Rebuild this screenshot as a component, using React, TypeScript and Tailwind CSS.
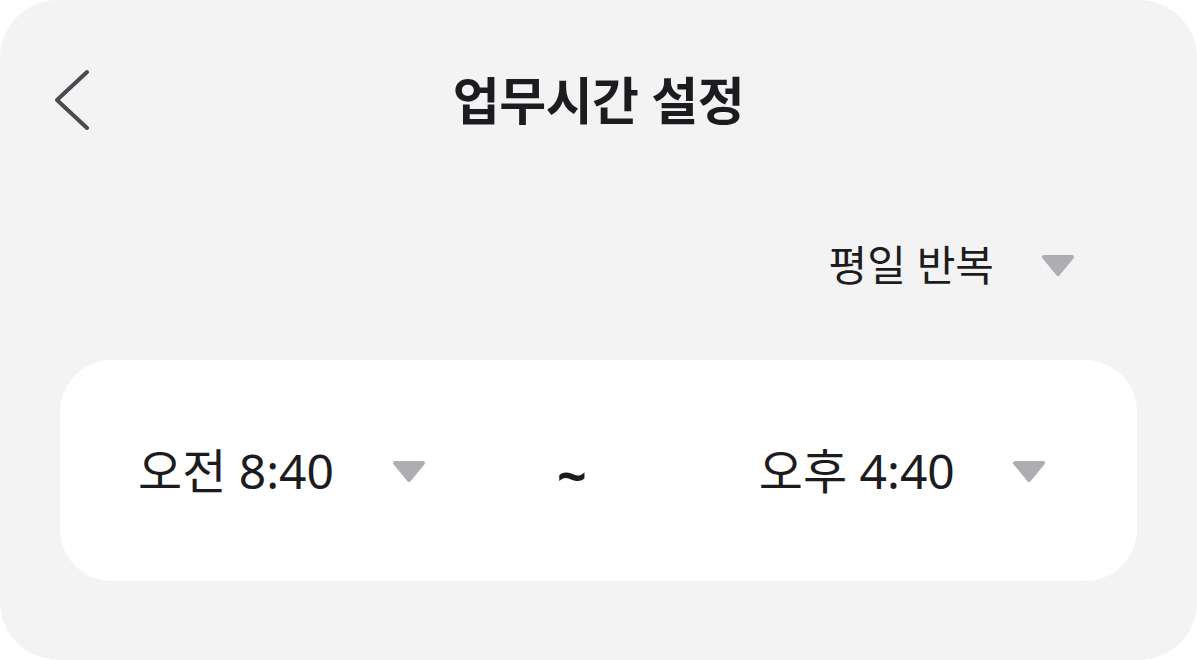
import React from "react";

const FONT = { fontFamily: '"Noto Sans", "Noto Sans CJK KR", sans-serif' };

function Caret({ className = "" }: { className?: string }) {
  return (
    <svg width="36" height="24" viewBox="0 0 36 24" className={className}>
      <path
        d="M4 4 L32 4 L18 21 Z"
        fill="#aeadb2"
        stroke="#aeadb2"
        strokeWidth="4"
        strokeLinejoin="round"
      />
    </svg>
  );
}

function BackIcon() {
  return (
    <svg width="40" height="66" viewBox="0 0 40 66">
      <path
        d="M32 5 L2 33 L32 61"
        fill="none"
        stroke="#4b4a50"
        strokeWidth="4"
        strokeLinecap="round"
        strokeLinejoin="round"
      />
    </svg>
  );
}

export default function App() {
  return (
    <div className="w-[1197px] h-[660px] bg-white" style={FONT}>
      <div className="w-full h-full rounded-[58px] bg-[#f3f3f3] flex flex-col text-[#1c1c20]">
        {/* header */}
        <div className="h-[200px] grid grid-cols-[1fr_auto_1fr] items-center">
          <div className="pl-[55px] flex items-center">
            <BackIcon />
          </div>
          <h1 className="text-[51px] font-bold leading-none tracking-[-0.5px]">업무시간 설정</h1>
          <div />
        </div>

        {/* repeat selector */}
        <div className="h-[130px] flex items-center justify-end pr-[121px]">
          <span className="text-[42px] leading-none">평일 반복</span>
          <Caret className="ml-[46px]" />
        </div>

        {/* time range */}
        <div className="mt-[30px] mx-[60px] h-[221px] rounded-[52px] bg-white flex items-center pl-[78px]">
          <span className="text-[48px] leading-none">오전 8:40</span>
          <Caret className="ml-[57px]" />
          <span className="ml-[130px] pt-[8px] text-[52px] font-bold leading-none">~</span>
          <span className="ml-[172px] text-[48px] leading-none">오후 4:40</span>
          <Caret className="ml-[56px]" />
        </div>
      </div>
    </div>
  );
}
